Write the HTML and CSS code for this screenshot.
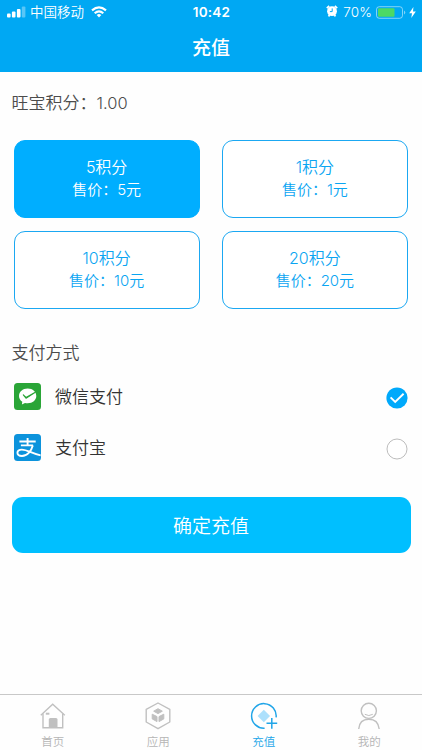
FILE: index.html
```html
<!DOCTYPE html>
<html lang="zh-CN">

<head>
	<meta charset="utf-8">
	<meta name="viewport" content="width=device-width, initial-scale=1.0">
	<title>充值</title>
	<link rel="stylesheet" href="styles.css">
</head>

<body>
	<header>
		<div class="status">
			<div class="status_left">
				<svg width="19" height="12" viewBox="0 0 19 12" fill="#fff">
					<rect x="0" y="7.5" width="3.6" height="4" rx="1" />
					<rect x="4.9" y="5.5" width="3.6" height="6" rx="1" />
					<rect x="9.9" y="3" width="3.6" height="8.5" rx="1" />
					<rect x="14.8" y="0.5" width="3.6" height="11" rx="1" opacity="0.35" />
				</svg>
				<span class="carrier">中国移动</span>
				<svg class="wifi" width="16" height="12" viewBox="0 0 16 12" fill="none" stroke="#fff" stroke-width="2.1">
					<path d="M1 4.4Q8 -1.8 15 4.4" />
					<path d="M3.7 7.3Q8 3.4 12.3 7.3" />
					<path d="M5.7 8.9Q8 7.1 10.3 8.9L8 11.4Z" fill="#fff" stroke="none" />
				</svg>
			</div>
			<span class="time">10:42</span>
			<div class="status_right">
				<svg class="alarm" width="12" height="12" viewBox="0 0 12 12">
					<path d="M0.8 3.2L3.2 1M11.2 3.2L8.8 1M2.5 11.4L3.6 10M9.5 11.4L8.4 10" stroke="#fff" stroke-width="1.7" />
					<circle cx="6" cy="6.2" r="4.9" fill="#fff" />
					<path d="M6.2 3.4V6.6H3.9" fill="none" stroke="#00a8f3" stroke-width="1" />
				</svg>
				<span class="percent">70%</span>
				<svg width="30" height="13" viewBox="0 0 30 13">
					<rect x="0.5" y="0.7" width="26" height="11.6" rx="2.8" fill="none" stroke="#fff" stroke-opacity="0.5" />
					<rect x="2" y="2.2" width="16.5" height="8.6" rx="1" fill="#4cd964" />
					<path d="M28 4.5Q30.6 6.5 28 8.5Z" fill="#fff" fill-opacity="0.5" />
				</svg>
				<svg class="bolt" width="7" height="11" viewBox="0 0 7 11">
					<path d="M4.4 0L0.2 6.2H3L2.3 11L6.8 4.5H4Z" fill="#fff" />
				</svg>
			</div>
		</div>
		<h1>充值</h1>
	</header>

	<main>
		<p class="balance">旺宝积分：<span>1.00</span></p>

		<section class="packages">
			<button class="package selected">
				<span class="points">5积分</span>
				<span class="price">售价：5元</span>
			</button>
			<button class="package">
				<span class="points">1积分</span>
				<span class="price">售价：1元</span>
			</button>
			<button class="package">
				<span class="points">10积分</span>
				<span class="price">售价：10元</span>
			</button>
			<button class="package">
				<span class="points">20积分</span>
				<span class="price">售价：20元</span>
			</button>
		</section>

		<h2>支付方式</h2>
		<ul class="payments">
			<li>
				<svg width="27" height="27" viewBox="0 0 27 27">
					<rect width="27" height="27" rx="3.5" fill="#2aa537" />
					<path d="M13.7 5.6C8.6 5.6 5 8.9 5 13C5 15.5 6.3 17.5 8.3 18.8L7.9 21.6L11 20C17.5 21.3 22.3 17.7 22.3 13C22.3 8.9 18.8 5.6 13.7 5.6Z" fill="#fff" />
					<path d="M9.3 11.9L12 14.4L21.3 9.2L12 15.2Z" fill="#2aa537" stroke="#2aa537" stroke-width="1.1" stroke-linejoin="round" />
				</svg>
				<span class="pay_name">微信支付</span>
				<svg class="radio" width="22" height="22" viewBox="0 0 22 22">
					<circle cx="11" cy="11" r="10.6" fill="#00a9fb" />
					<path d="M4.6 10.4L9.2 15L17.6 6.8" fill="none" stroke="#fff" stroke-width="1.9" />
				</svg>
			</li>
			<li>
				<svg width="27" height="27" viewBox="0 0 27 27">
					<rect width="27" height="27" rx="3.5" fill="#0c93dc" />
					<g fill="none" stroke="#fff" stroke-width="1.9">
						<path d="M5.4 7.5H21.7M13.6 4V11.4M6.9 11.4H19.1" />
						<path d="M18.8 11.4C17.3 17 13.2 22 8 22C1.9 22 2 15.6 7.8 15.6C13.1 15.6 18.5 19.7 26.6 21.4" />
					</g>
				</svg>
				<span class="pay_name">支付宝</span>
				<svg class="radio" width="22" height="22" viewBox="0 0 22 22">
					<circle cx="11" cy="11" r="10" fill="#fff" stroke="#bdbdbd" />
				</svg>
			</li>
		</ul>

		<button class="submit">确定充值</button>
	</main>

	<nav>
		<a>
			<svg width="28" height="28" viewBox="0 0 28 28" fill="none" stroke="#c0c0c0" stroke-width="1.4">
				<path d="M1.8 13.2L13.7 2.2L25.8 13.2" />
				<path d="M4 11.5V25.8H23.7V11.5" />
				<path d="M9.8 25.5V17.5Q9.8 16 11.3 16H17Q18.5 16 18.5 17.5V25.5Z" fill="#c0c0c0" stroke="none" />
				<path d="M6.8 11.7H10.4" stroke-width="2" />
			</svg>
			<span>首页</span>
		</a>
		<a>
			<svg width="28" height="28" viewBox="0 0 28 28">
				<path d="M14 1L25.8 7.4V20L14 26.7L2.2 20V7.4Z" fill="none" stroke="#c0c0c0" stroke-width="1.4" stroke-linejoin="round" />
				<g fill="#c0c0c0" stroke="#c0c0c0" stroke-linejoin="round">
					<path d="M14 6.7L18.3 9.2L14 11.6L9.7 9.2Z" />
					<path d="M8.2 12.2L13 14.6V19.6L8.2 16.9Z" />
					<path d="M19.8 12.2L15 14.6V19.6L19.8 16.9Z" />
				</g>
			</svg>
			<span>应用</span>
		</a>
		<a class="active">
			<svg width="28" height="28" viewBox="0 0 28 28" fill="none" stroke="#20a5e8" stroke-width="1.5">
				<path d="M14.6 26.2A12.3 12.3 0 1 1 26.1 15.4" />
				<path d="M13.8 7.8L20.1 14L13.8 20.2L7.6 14Z" fill="#ace0fc" stroke="none" />
				<path d="M16.5 21.3H27.2M21.8 16V26.8" />
			</svg>
			<span>充值</span>
		</a>
		<a>
			<svg width="28" height="28" viewBox="0 0 28 28" fill="none" stroke="#c0c0c0" stroke-width="1.4">
				<circle cx="13.8" cy="8.8" r="7.6" />
				<path d="M9.8 12.3Q13.8 14.8 17.8 12.3" stroke-width="1" />
				<path d="M3.7 27C4.2 20.5 8.2 17.2 13.8 17.2S23.5 20.5 24.2 27" />
			</svg>
			<span>我的</span>
		</a>
	</nav>
</body>

</html>
```
FILE: styles.css
```css
* {
	margin: 0;
	padding: 0;
	box-sizing: border-box;
}

body {
	display: flex;
	flex-direction: column;
	height: 750px;
	background-color: #fefefe;
	color: #4c4c4c;
	font-family: Inter, "Noto Sans CJK SC", sans-serif;
	font-weight: 350;
}

svg {
	display: block;
	flex-shrink: 0;
}

button {
	font-family: inherit;
	font-weight: inherit;
}

header {
	height: 72px;
	background-color: #00a8f3;
	color: #fff;
}

.status {
	display: grid;
	grid-template-columns: 1fr auto 1fr;
	align-items: center;
	height: 24px;
	padding: 0 6px 0 7px;
	font-size: 13px;
	line-height: 24px;
}

.status_left,
.status_right {
	display: flex;
	align-items: center;
}

.status_right {
	justify-content: flex-end;
}

.carrier {
	margin-left: 4px;
	font-size: 13.5px;
}

.wifi {
	margin-left: 7px;
}

.time {
	font-size: 13.5px;
	font-weight: 600;
	letter-spacing: 0.2px;
}

.alarm {
	margin-bottom: 2px;
}

.percent {
	margin: 0 4px 0 5px;
	font-size: 13.5px;
	letter-spacing: 0.1px;
}

.bolt {
	margin-left: 3px;
}

h1 {
	font-size: 19px;
	font-weight: 500;
	line-height: 50px;
	text-align: center;
}

main {
	flex: 1;
	padding: 18px 11.5px 0;
}

.balance {
	font-size: 17px;
	line-height: 26px;
}

.balance span {
	font-size: 16.5px;
}

.packages {
	display: grid;
	grid-template-columns: 1fr 1fr;
	gap: 12.5px 22px;
	padding: 23.5px 2.5px 0 2px;
}

.package {
	display: flex;
	flex-direction: column;
	align-items: center;
	height: 78.5px;
	padding-top: 15.5px;
	border: 1px solid #1ba8f2;
	border-radius: 11px;
	background-color: #fff;
	color: #0aa5f2;
}

.package.selected {
	border-color: #00aeff;
	background-color: #00aeff;
	color: #fff;
}

.points {
	font-size: 16px;
	line-height: 23px;
}

.price {
	font-size: 15px;
	line-height: 22px;
}

h2 {
	margin-top: 31px;
	font-size: 17px;
	font-weight: inherit;
	line-height: 26px;
}

.payments {
	padding: 5px 3px 0 2.5px;
	list-style: none;
}

.payments li {
	display: flex;
	align-items: center;
	height: 51px;
}

.pay_name {
	margin-left: 14px;
	color: #333;
	font-size: 17px;
	line-height: 26px;
}

.radio {
	margin: 3px 0 0 auto;
}

.submit {
	display: block;
	width: 100%;
	height: 56px;
	margin-top: 24px;
	padding-bottom: 2px;
	border: none;
	border-radius: 11px;
	background-color: #00bfff;
	color: #fff;
	font-size: 19px;
}

nav {
	display: grid;
	grid-template-columns: repeat(4, 1fr);
	height: 56px;
	border-top: 1px solid #c8c8c8;
}

nav a {
	display: flex;
	flex-direction: column;
	align-items: center;
	padding-top: 7px;
	color: #b5b5b5;
	font-size: 11.5px;
	line-height: 24px;
}

nav .active {
	color: #20a5e8;
}
```
